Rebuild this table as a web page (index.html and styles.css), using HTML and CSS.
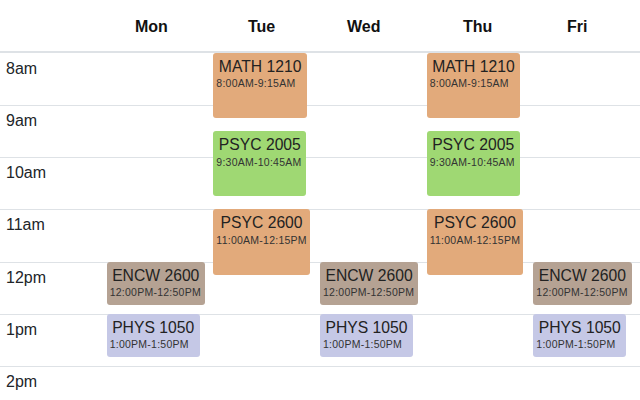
FILE: index.html
```html
<!DOCTYPE html>
<html>
<head>
<meta charset="utf-8">
<title>Schedule</title>
<link rel="stylesheet" href="styles.css">
</head>
<body>
<div class="cal">
  <div class="head">
    <div class="hcell"></div>
    <div class="hcell">Mon</div>
    <div class="hcell">Tue</div>
    <div class="hcell">Wed</div>
    <div class="hcell">Thu</div>
    <div class="hcell">Fri</div>
  </div>
  <div class="grid">
    <div class="row first" style="grid-row: 1"><span class="tl">8am</span></div>
    <div class="row" style="grid-row: 2"><span class="tl">9am</span></div>
    <div class="row" style="grid-row: 3"><span class="tl">10am</span></div>
    <div class="row" style="grid-row: 4"><span class="tl">11am</span></div>
    <div class="row" style="grid-row: 5"><span class="tl">12pm</span></div>
    <div class="row" style="grid-row: 6"><span class="tl">1pm</span></div>
    <div class="row" style="grid-row: 7"><span class="tl">2pm</span></div>

    <div class="day" style="grid-column: 2">
      <div class="ev brown" style="top: 208.8px; height: 43.5px"><div class="t">ENCW 2600</div><div class="tm">12:00PM-12:50PM</div></div>
      <div class="ev lav" style="top: 261px; height: 43.5px"><div class="t">PHYS 1050</div><div class="tm">1:00PM-1:50PM</div></div>
    </div>
    <div class="day" style="grid-column: 3">
      <div class="ev orange" style="top: 0px; height: 65.25px"><div class="t">MATH 1210</div><div class="tm">8:00AM-9:15AM</div></div>
      <div class="ev green" style="top: 78.3px; height: 65.25px"><div class="t">PSYC 2005</div><div class="tm">9:30AM-10:45AM</div></div>
      <div class="ev orange" style="top: 156.6px; height: 65.25px"><div class="t">PSYC 2600</div><div class="tm">11:00AM-12:15PM</div></div>
    </div>
    <div class="day" style="grid-column: 4">
      <div class="ev brown" style="top: 208.8px; height: 43.5px"><div class="t">ENCW 2600</div><div class="tm">12:00PM-12:50PM</div></div>
      <div class="ev lav" style="top: 261px; height: 43.5px"><div class="t">PHYS 1050</div><div class="tm">1:00PM-1:50PM</div></div>
    </div>
    <div class="day" style="grid-column: 5">
      <div class="ev orange" style="top: 0px; height: 65.25px"><div class="t">MATH 1210</div><div class="tm">8:00AM-9:15AM</div></div>
      <div class="ev green" style="top: 78.3px; height: 65.25px"><div class="t">PSYC 2005</div><div class="tm">9:30AM-10:45AM</div></div>
      <div class="ev orange" style="top: 156.6px; height: 65.25px"><div class="t">PSYC 2600</div><div class="tm">11:00AM-12:15PM</div></div>
    </div>
    <div class="day" style="grid-column: 6">
      <div class="ev brown" style="top: 208.8px; height: 43.5px"><div class="t">ENCW 2600</div><div class="tm">12:00PM-12:50PM</div></div>
      <div class="ev lav" style="top: 261px; height: 43.5px"><div class="t">PHYS 1050</div><div class="tm">1:00PM-1:50PM</div></div>
    </div>
  </div>
</div>
</body>
</html>
```

FILE: styles.css
```css
html, body {
  margin: 0;
  padding: 0;
  background: #fff;
  overflow: hidden;
}
body {
  font-family: "Liberation Sans", Arial, sans-serif;
  color: #212529;
  width: 640px;
  height: 400px;
}
.cal {
  width: 640px;
}
.head {
  display: grid;
  grid-template-columns: 135px 113px 99px 116px 104px 1fr;
  height: 52.8px;
  box-sizing: border-box;
  border-bottom: 2px solid #dee2e6;
}
.hcell {
  font-weight: bold;
  font-size: 16px;
  line-height: 24px;
  padding-top: 15px;
  color: #111;
}
.grid {
  display: grid;
  grid-template-columns: repeat(6, 1fr);
  grid-template-rows: repeat(7, 52.2px);
}
.row {
  grid-column: 1 / -1;
  border-top: 1px solid #dee2e6;
  box-sizing: border-box;
  padding: 3px 6px 0;
  font-size: 16px;
  line-height: 24px;
}
.row.first {
  border-top: none;
  padding-top: 4px;
}
.day {
  grid-row: 1 / -1;
  position: relative;
}
.ev {
  position: absolute;
  left: 0;
  width: max-content;
  box-sizing: border-box;
  padding: 5px 3px 0;
  border-radius: 3px;
  color: #222;
}
.ev .t {
  font-size: 15.7px;
  line-height: 18.6px;
  padding: 0 2.5px;
  text-align: center;
}
.ev .tm {
  font-size: 10.5px;
  line-height: 12px;
  margin-top: 1px;
  letter-spacing: 0.25px;
  color: #333;
}
.orange { background: #e2aa7b; }
.green { background: #9fd873; }
.brown { background: #b5a293; }
.lav { background: #c5c8e6; }
```
